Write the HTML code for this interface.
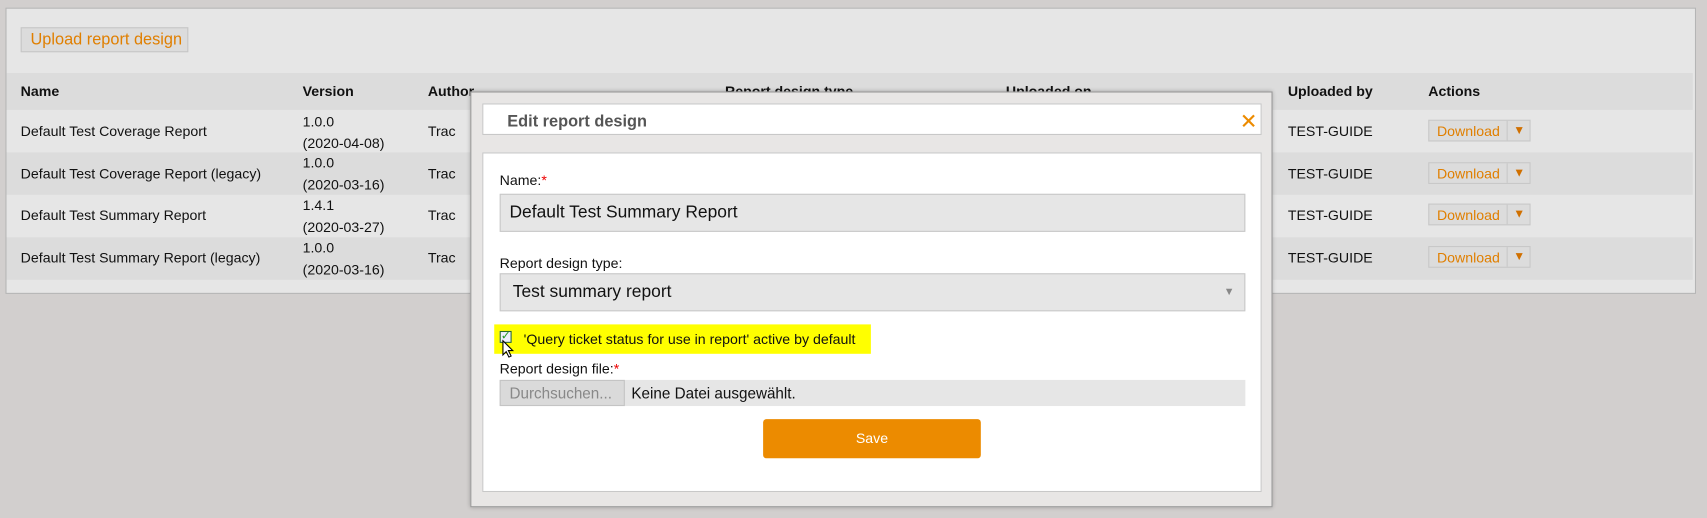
<!DOCTYPE html>
<html><head><meta charset="utf-8"><style>
*{box-sizing:border-box;margin:0;padding:0}
html,body{width:1707px;height:518px;overflow:hidden;background:#d2cfce;font-family:"Liberation Sans",Arial,sans-serif;color:#111}
#w{position:absolute;left:0;top:0;width:1568px;height:476px;transform:scale(1.0886);transform-origin:0 0}
.a{position:absolute}
.panel{left:5px;top:7px;width:1553px;height:263px;background:#e6e6e6;border:1px solid #b5b5b5}
.up{left:19px;top:25px;width:154px;height:23px;background:#dcdcdc;border:1px solid #c6c6c6;color:#e07f00;font-size:15px;line-height:21px;padding-left:8px}
.hd{left:6px;top:67px;width:1549px;height:34px;background:#dcdcdc}
.th{font-weight:bold;font-size:13px;top:76px}
.row{left:6px;width:1549px;height:39px}
.td{font-size:13px}
.dl{width:94px;height:20px;border:1px solid #c8c8c8;background:#dcdcdc;left:1312px;font-size:13px;color:#e07f00}
.dl span{position:absolute;left:7px;top:2px}
.dl i{position:absolute;left:71px;top:0;height:18px;border-left:1px solid #c8c8c8;width:22px;font-style:normal;font-size:11px;text-align:center;line-height:18px;color:#d07000}
.modal{left:432px;top:84px;width:737px;height:382px;background:#e8e6e5;border:1px solid #999;box-shadow:0 0 4px rgba(0,0,0,.3)}
.box{background:#fff;border:1px solid #c8c8c8}
.lbl{font-size:13px;left:459px}
.inp{left:459px;width:685px;height:35px;background:#e6e6e6;border:1px solid #c8c8c8;font-size:16px;padding-left:8px;line-height:33px}
.req{color:#e00}
</style></head><body><div id="w">
<div class="a panel"></div>
<div class="a up">Upload report design</div>
<div class="a hd"></div>
<div class="a th" style="left:19px">Name</div>
<div class="a th" style="left:278px">Version</div>
<div class="a th" style="left:393px">Author</div>
<div class="a th" style="left:666px">Report design type</div>
<div class="a th" style="left:924px">Uploaded on</div>
<div class="a th" style="left:1183px">Uploaded by</div>
<div class="a th" style="left:1312px">Actions</div>

<div class="a row" style="top:101px;background:#e6e6e6"></div>
<div class="a row" style="top:140px;background:#dcdcdc"></div>
<div class="a row" style="top:179px;background:#e6e6e6"></div>
<div class="a row" style="top:218px;background:#dcdcdc"></div>

<div class="a td" style="left:19px;top:113px">Default Test Coverage Report</div>
<div class="a td" style="left:278px;top:102px;line-height:20px">1.0.0<br>(2020-04-08)</div>
<div class="a td" style="left:393px;top:113px">Trac</div>
<div class="a td" style="left:1183px;top:113px">TEST-GUIDE</div>
<div class="a dl" style="top:110px"><span>Download</span><i>▼</i></div>

<div class="a td" style="left:19px;top:152px">Default Test Coverage Report (legacy)</div>
<div class="a td" style="left:278px;top:140px;line-height:20px">1.0.0<br>(2020-03-16)</div>
<div class="a td" style="left:393px;top:152px">Trac</div>
<div class="a td" style="left:1183px;top:152px">TEST-GUIDE</div>
<div class="a dl" style="top:149px"><span>Download</span><i>▼</i></div>

<div class="a td" style="left:19px;top:190px">Default Test Summary Report</div>
<div class="a td" style="left:278px;top:179px;line-height:20px">1.4.1<br>(2020-03-27)</div>
<div class="a td" style="left:393px;top:190px">Trac</div>
<div class="a td" style="left:1183px;top:190px">TEST-GUIDE</div>
<div class="a dl" style="top:187px"><span>Download</span><i>▼</i></div>

<div class="a td" style="left:19px;top:229px">Default Test Summary Report (legacy)</div>
<div class="a td" style="left:278px;top:218px;line-height:20px">1.0.0<br>(2020-03-16)</div>
<div class="a td" style="left:393px;top:229px">Trac</div>
<div class="a td" style="left:1183px;top:229px">TEST-GUIDE</div>
<div class="a dl" style="top:226px"><span>Download</span><i>▼</i></div>

<div class="a modal"></div>
<div class="a box" style="left:443px;top:95px;width:716px;height:29px"></div>
<div class="a" style="left:466px;top:103px;font-size:15px;font-weight:bold;color:#555">Edit report design</div>
<svg class="a" style="left:1141px;top:105px" width="12" height="12" viewBox="0 0 12 12"><path d="M1 1L11 11M11 1L1 11" stroke="#ec8b00" stroke-width="2"/></svg>
<div class="a box" style="left:443px;top:140px;width:716px;height:312px"></div>
<div class="a lbl" style="top:158px">Name:<span class="req">*</span></div>
<div class="a inp" style="top:178px">Default Test Summary Report</div>
<div class="a lbl" style="top:234px">Report design type:</div>
<div class="a inp" style="top:251px;padding-left:11px">Test summary report<span style="position:absolute;right:9px;top:0;font-size:10px;color:#888">▼</span></div>
<div class="a" style="left:454px;top:298px;width:346px;height:27px;background:#ffff00"></div>
<div class="a" style="left:459px;top:304px;width:11px;height:11px;border:1px solid #2a6a2a;background:#eef"></div>
<div class="a" style="left:460px;top:302px;font-size:11px;color:#2a9a2a">✓</div>
<svg class="a" style="left:461px;top:312px" width="12" height="18" viewBox="0 0 12 18"><path d="M1 1 L1 14 L4 11 L6.5 16 L8.5 15 L6 10 L10 10 Z" fill="#fff" stroke="#000" stroke-width="1"/></svg>
<div class="a" style="left:481px;top:304px;font-size:13px">'Query ticket status for use in report' active by default</div>
<div class="a lbl" style="top:331px">Report design file:<span class="req">*</span></div>
<div class="a" style="left:459px;top:349px;width:685px;height:24px;background:#e6e6e6"></div>
<div class="a" style="left:459px;top:349px;width:115px;height:24px;background:#dadada;border:1px solid #c4c4c4;color:#888;font-size:14px;line-height:22px;padding-left:8px">Durchsuchen...</div>
<div class="a" style="left:580px;top:353px;font-size:14px">Keine Datei ausgewählt.</div>
<div class="a" style="left:701px;top:385px;width:200px;height:36px;background:#ec8b00;border-radius:3px;color:#fff;font-size:13px;text-align:center;line-height:36px">Save</div>
</div></body></html>
